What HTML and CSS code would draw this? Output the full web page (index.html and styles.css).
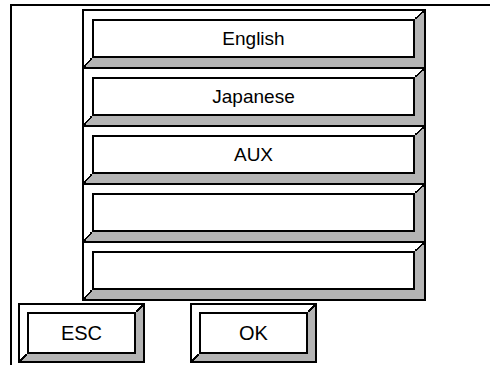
FILE: index.html
```html
<!DOCTYPE html>
<html lang="en">
<head>
    <meta charset="UTF-8">
    <meta name="viewport" content="width=device-width, initial-scale=1.0">
    <title>Language Select</title>
    <link rel="stylesheet" href="styles.css">
</head>
<body>
    <div class="frame">
        <div class="list">
            <div class="item"><div class="bevel"><div class="face">English</div></div></div>
            <div class="item"><div class="bevel"><div class="face">Japanese</div></div></div>
            <div class="item"><div class="bevel"><div class="face">AUX</div></div></div>
            <div class="item"><div class="bevel"><div class="face"></div></div></div>
            <div class="item"><div class="bevel"><div class="face"></div></div></div>
        </div>

        <div class="buttons">
            <div class="item btn"><div class="bevel"><div class="face">ESC</div></div></div>
            <div class="item btn"><div class="bevel"><div class="face">OK</div></div></div>
        </div>
    </div>
</body>
</html>
```

FILE: styles.css
```css
body {
    font-family: "Liberation Sans", Arial, sans-serif;
    margin: 4px 0 0 10px;
    overflow: hidden;
    background: #fff;
}
.frame {
    border-top: 2px solid #000;
    border-left: 2px solid #000;
    height: 365px;
    box-sizing: border-box;
}
.list {
    margin: 3px 0 0 70px;
    width: 344px;
    display: flex;
    flex-direction: column;
}
.item {
    border: 2px solid #000;
}
.item + .item {
    margin-top: -2px;
}
.bevel {
    position: relative;
    border-style: solid;
    border-width: 8px 9px 9px 8px;
    border-color: #fff #b4b4b4 #b4b4b4 #fff;
}
/* black diagonals where the white and grey bevels meet */
.bevel::before,
.bevel::after {
    content: "";
    position: absolute;
    background: linear-gradient(to bottom right,
        transparent calc(50% - 0.8px), #000 calc(50% - 0.8px),
        #000 calc(50% + 0.8px), transparent calc(50% + 0.8px));
}
.bevel::before {
    top: -8px;
    right: -9px;
    width: 9px;
    height: 8px;
}
.bevel::after {
    bottom: -9px;
    left: -8px;
    width: 8px;
    height: 9px;
}
.face {
    border: 2px solid #000;
    background: #fff;
    height: 35px;
    box-sizing: content-box;
    padding-top: 1px;
    height: 34px;
    display: flex;
    align-items: center;
    justify-content: center;
    font-size: 19px;
    color: #000;
}
.buttons {
    display: flex;
    gap: 45px;
    margin: 2px 0 0 6px;
}
.buttons .item + .item {
    margin-top: 0;
}
.btn {
    width: 127px;
    box-sizing: border-box;
}
.btn .bevel {
    border-width: 7px;
}
.btn .bevel::before {
    top: -7px;
    right: -7px;
    width: 7px;
    height: 7px;
}
.btn .bevel::after {
    bottom: -7px;
    left: -7px;
    width: 7px;
    height: 7px;
}
.btn .face {
    height: 37px;
    font-size: 20px;
}
```
